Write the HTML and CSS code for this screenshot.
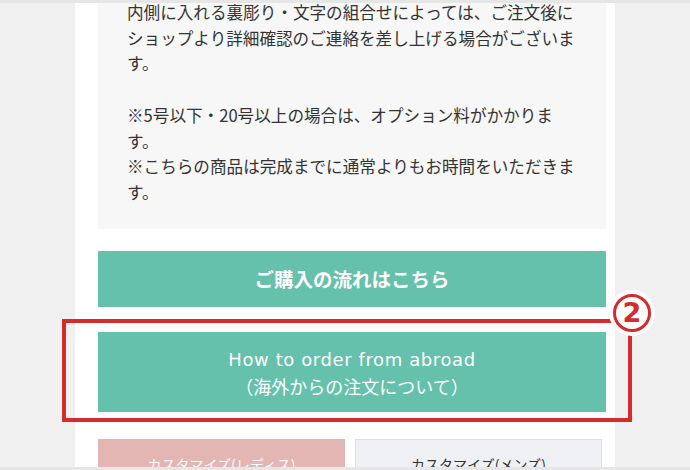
FILE: index.html
```html
<!DOCTYPE html>
<html lang="ja">
<head>
  <meta charset="UTF-8" />
  <title>ご購入について</title>
  <link rel="stylesheet" href="styles.css">
</head>
<body>
  <div class="edge"></div>
  <main class="viewport">
    <div class="column">
      <div class="note">
        <p>内側に入れる裏彫り・文字の組合せによっては、ご注文後にショップより詳細確認のご連絡を差し上げる場合がございます。<br><br>※5号以下・20号以上の場合は、オプション料がかかります。<br>※こちらの商品は完成までに通常よりもお時間をいただきます。</p>
      </div>

      <a class="btn btn-flow" href="#">ご購入の流れはこちら</a>

      <!-- annotated button -->
      <div class="highlight">
        <a class="btn btn-abroad" href="#">
          <span class="label"><span class="en">How to order from abroad</span><br>（海外からの注文について）</span>
        </a>
        <span class="mark-box"></span>
        <span class="mark-num">2</span>
      </div>

      <div class="custom-row">
        <a class="custom custom-ladies" href="#">カスタマイズ(レディス)</a>
        <a class="custom custom-mens" href="#">カスタマイズ(メンズ)</a>
      </div>
    </div>
  </main>
  <div class="edge"></div>
</body>
</html>
```

FILE: styles.css
```css
html, body {
  margin: 0;
}
body {
  display: flex;
  flex-direction: column;
  height: 470px;
  overflow: hidden;
  background: #f0f0f0;
  font-family: "Noto Sans CJK JP", sans-serif;
  color: #333;
}
a {
  text-decoration: none;
}
.edge {
  flex: none;
  height: 3px;
  background: #e6e6e6;
}
.viewport {
  flex: 1;
  overflow: hidden;
}
.column {
  box-sizing: border-box;
  width: 540px;
  min-height: 100%;
  margin-left: 75px;
  padding: 0 9px 0 23px;
  background: #fff;
}
.note {
  margin-top: -3px;
  padding: 0 28px 23px 29px;
  background: #f7f7f7;
  font-size: 16.6px;
  line-height: 25.7px;
}
.note p {
  margin: 0;
}
.btn {
  display: flex;
  align-items: center;
  justify-content: center;
  background: #65c1ab;
  color: #fff;
  text-align: center;
}
.btn-flow {
  height: 56px;
  margin-top: 22px;
  font-size: 19.5px;
  font-weight: bold;
}
.highlight {
  position: relative;
  margin-top: 25px;
}
.btn-abroad {
  height: 80px;
  font-size: 18px;
  line-height: 26px;
}
.btn-abroad .label {
  display: block;
}
.btn-abroad .en {
  font-family: "DejaVu Sans", "Noto Sans CJK JP", sans-serif;
  letter-spacing: 0.6px;
}
.mark-box {
  position: absolute;
  box-sizing: border-box;
  left: -36px;
  right: -26px;
  top: -13px;
  bottom: -10px;
  border: 4px solid #d42b2b;
}
.mark-num {
  position: absolute;
  box-sizing: border-box;
  left: 515px;
  top: -38px;
  width: 38px;
  height: 38px;
  border: 3px solid #d42b2b;
  border-radius: 50%;
  background: #fff;
  box-shadow: 0 0 0 4px #fff;
  color: #d42b2b;
  font-family: "DejaVu Sans", sans-serif;
  font-weight: bold;
  font-size: 27px;
  line-height: 32px;
  text-align: center;
}
.custom-row {
  display: grid;
  grid-template-columns: 1fr 1fr;
  gap: 10px;
  margin: 27px 4px 0 0;
}
.custom {
  box-sizing: border-box;
  display: flex;
  align-items: center;
  justify-content: center;
  height: 50px;
  font-size: 14px;
}
.custom-ladies {
  background: #e3b6b3;
  color: #fff;
}
.custom-mens {
  background: #eef0f4;
  border: 1px solid #dcdfe4;
  color: #333;
}
```
